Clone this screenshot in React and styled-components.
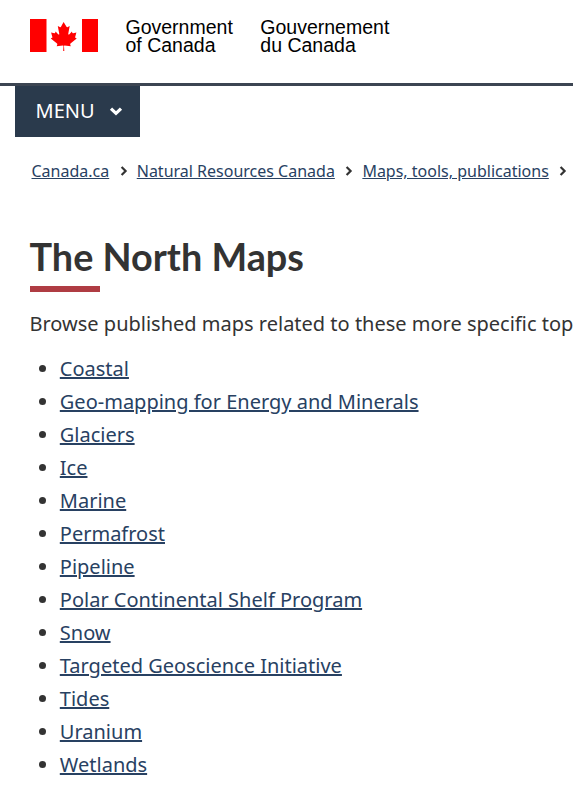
import React from "react"
import styled, { createGlobalStyle } from "styled-components"

const topics = [
  "Coastal",
  "Geo-mapping for Energy and Minerals",
  "Glaciers",
  "Ice",
  "Marine",
  "Permafrost",
  "Pipeline",
  "Polar Continental Shelf Program",
  "Snow",
  "Targeted Geoscience Initiative",
  "Tides",
  "Uranium",
  "Wetlands",
]

const crumbs = ["Canada.ca", "Natural Resources Canada", "Maps, tools, publications"]

function Flag() {
  return (
    <FlagSvg viewBox="0 0 68 33" aria-hidden="true">
      <rect x="0" y="0" width="16.5" height="33" fill="#f00" />
      <rect x="52" y="0" width="16" height="33" fill="#f00" />
      <path
        fill="#f00"
        d="M33.6 3 L31 7.8 C30.7 8.3 30.2 8.3 29.7 8 L27.8 7 L29.2 14.4 C29.5 15.8 28.6 15.8 28.1 15.2 L25.6 12.4 L25.2 13.8 C25.1 14.2 24.7 14.3 24.3 14.2 L21.1 13.5 L22.2 17.4 C22.4 18.2 22.6 18.6 21.9 18.8 L20.8 19.4 L27 24.4 C27.3 24.7 27.4 25 27.3 25.4 L26.7 27.3 L33 26.6 C33.3 26.6 33.5 26.8 33.5 27.1 L33.2 32 L34.3 32 L34 27.1 C34 26.8 34.2 26.6 34.5 26.6 L40.8 27.3 L40.2 25.4 C40.1 25 40.2 24.7 40.5 24.4 L46.7 19.4 L45.6 18.8 C44.9 18.6 45.1 18.2 45.3 17.4 L46.4 13.5 L43.2 14.2 C42.8 14.3 42.4 14.2 42.3 13.8 L41.9 12.4 L39.4 15.2 C38.9 15.8 38 15.8 38.3 14.4 L39.7 7 L37.8 8 C37.3 8.3 36.8 8.3 36.5 7.8 Z"
      />
    </FlagSvg>
  )
}

function Chevron() {
  return (
    <ChevronSvg viewBox="0 0 14 10" aria-hidden="true">
      <path d="M2 2.6 L7 7.4 L12 2.6" fill="none" stroke="#fff" strokeWidth="3.2" />
    </ChevronSvg>
  )
}

function Caret() {
  return (
    <CaretSvg viewBox="0 0 8 10" aria-hidden="true">
      <path d="M1.6 1 L5.6 5 L1.6 9" fill="none" stroke="#333" strokeWidth="2.2" />
    </CaretSvg>
  )
}

export default function App() {
  return (
    <Page>
      <GlobalStyle />
      <Header>
        <Flag />
        <Wordmark>Government<br />of Canada</Wordmark>
        <Wordmark>Gouvernement<br />du Canada</Wordmark>
      </Header>
      <MenuButton>
        <MenuLabel>MENU</MenuLabel>
        <Chevron />
      </MenuButton>
      <Breadcrumbs>
        {crumbs.map((crumb) => (
          <Crumb key={crumb}>
            <CrumbLink href="#">{crumb}</CrumbLink>
            <Caret />
          </Crumb>
        ))}
      </Breadcrumbs>
      <Main>
        <Title>The North Maps</Title>
        <Intro>Browse published maps related to these more specific topics:</Intro>
        <TopicList>
          {topics.map((topic) => (
            <Topic key={topic}>
              <TopicLink href="#">{topic}</TopicLink>
            </Topic>
          ))}
        </TopicList>
      </Main>
    </Page>
  )
}

const GlobalStyle = createGlobalStyle`
  html, body {
    margin: 0;
    padding: 0;
    background: #fff;
    overflow: hidden;
  }
`

const Page = styled.div`
  width: 573px;
  height: 795px;
  overflow: hidden;
  font-family: "Noto Sans", sans-serif;
  color: #333;
`

const Header = styled.header`
  height: 83px;
  border-bottom: 3px solid #3c4552;
  display: flex;
  align-items: flex-start;
  padding-left: 30px;
`

const FlagSvg = styled.svg`
  width: 68px;
  height: 33px;
  margin-top: 19px;
  margin-right: 27.5px;
  flex: none;
`

const Wordmark = styled.div`
  font-family: "Liberation Sans", Arial, sans-serif;
  font-size: 19.5px;
  line-height: 18px;
  color: #000;
  margin-top: 18px;
  margin-right: 27.5px;
  white-space: nowrap;
`

const MenuButton = styled.button`
  display: flex;
  align-items: center;
  gap: 14px;
  width: 125px;
  height: 51px;
  margin-left: 15px;
  padding: 0 0 0 20.5px;
  border: none;
  background: #2a3a4c;
  color: #fff;
  font-family: "Noto Sans", sans-serif;
  font-size: 20px;
  box-sizing: border-box;
`

const MenuLabel = styled.span`
  line-height: 48px;
  height: 49px;
`

const ChevronSvg = styled.svg`
  width: 14px;
  height: 10px;
  margin-top: -1px;
  flex: none;
`

const Breadcrumbs = styled.nav`
  display: flex;
  align-items: center;
  gap: 9px;
  margin: 22px 0 0 31.5px;
  height: 24px;
  white-space: nowrap;
`

const Crumb = styled.div`
  display: flex;
  align-items: center;
  gap: 10.5px;
  flex: none;
`

const CrumbLink = styled.a`
  font-size: 16px;
  line-height: 24px;
  color: #284162;
`

const CaretSvg = styled.svg`
  width: 8px;
  height: 10px;
  flex: none;
`

const Main = styled.main`
  padding-left: 29.5px;
`

const Title = styled.h1`
  position: relative;
  margin: 51px 0 0;
  height: 59px;
  font-family: Lato, sans-serif;
  font-weight: 700;
  font-size: 37.8px;
  line-height: 46px;
  color: #333;
  &::after {
    content: "";
    position: absolute;
    left: 0;
    top: 52px;
    width: 70px;
    height: 6px;
    background: #af3c43;
  }
`

const Intro = styled.p`
  margin: 16px 0 0;
  font-size: 20px;
  line-height: 30px;
  white-space: nowrap;
`

const TopicList = styled.ul`
  margin: 13px 0 0;
  padding: 0 0 0 30.3px;
  font-size: 20px;
`

const Topic = styled.li`
  height: 33px;
  line-height: 33px;
`

const TopicLink = styled.a`
  color: #284162;
`
